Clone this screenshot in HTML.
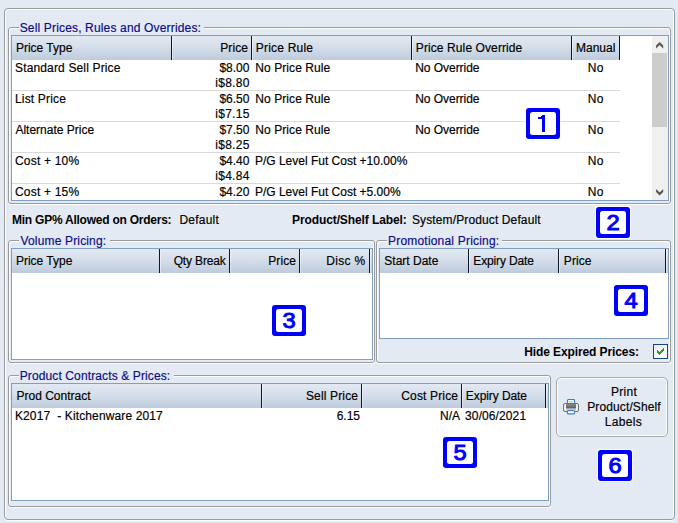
<!DOCTYPE html>
<html>
<head>
<meta charset="utf-8">
<title>Sell Prices</title>
<style>
*{box-sizing:border-box;margin:0;padding:0}
html,body{width:678px;height:523px;overflow:hidden;background:#e3eaf4}
body{position:relative;font-family:"Liberation Sans",sans-serif;font-size:12px;line-height:15px;color:#000}
.abs{position:absolute}
.grp{position:absolute;border:1px solid #9b9b9b;border-radius:3px;box-shadow:inset 1px 1px 0 #fff, inset -1px 0 0 #fff, 0 1px 0 #fff}
.leg{position:absolute;color:#0c0c86;background:#e3eaf4;white-space:nowrap;height:15px}
.tbl{position:absolute;background:#fff;border:1px solid #7f9fc1;overflow:hidden}
.hdr{position:absolute;left:0;top:0;height:24px;background:linear-gradient(#e2e9f2,#d3dde9 50%,#bdcbdd)}
.hs{position:absolute;top:0;width:2px;height:24px;border-left:1px solid #0b1626;border-right:1px solid rgba(255,255,255,.45)}
.t{position:absolute;white-space:nowrap;height:15px}
.t,.leg{-webkit-text-stroke:0.18px}
.t.b{-webkit-text-stroke:0}
.b{font-weight:bold}
.sep{position:absolute;left:0;height:1px;background:#d9d9d9}
.mk{position:absolute;width:34px;height:31px;border:4px solid #0000ff;border-radius:4px;background:#fff}
.mk svg{position:absolute;left:0;top:0}
</style>
</head>
<body>

<div class="grp" style="left:4px;top:8px;width:671px;height:512px;border-radius:4px"></div>
<div class="grp" style="left:8px;top:27px;width:663px;height:177px"></div>
<div class="leg" style="left:18.5px;top:21px;width:185.5px;padding-left:1.2px;letter-spacing:0.16px">Sell Prices, Rules and Overrides:</div>
<div class="tbl" style="left:11px;top:35px;width:658px;height:166px">
<div class="hdr" style="width:608px"></div>
<div class="hs" style="left:159px"></div>
<div class="hs" style="left:239px"></div>
<div class="hs" style="left:399px"></div>
<div class="hs" style="left:559px"></div>
<div class="hs" style="left:607px"></div>
<div class="t" style="left:3.9px;top:5px;">Price Type</div>
<div class="t" style="right:420px;top:5px;letter-spacing:0.1px;margin-right:-0.1px;">Price</div>
<div class="t" style="left:243.8px;top:5px;letter-spacing:0.2px;">Price Rule</div>
<div class="t" style="left:403.8px;top:5px;letter-spacing:0.1px;">Price Rule Override</div>
<div class="t" style="left:564px;top:5px;">Manual</div>
<div class="t" style="left:3px;top:25px;letter-spacing:0.15px;">Standard Sell Price</div>
<div class="t" style="right:418.6px;top:25px;">$8.00</div>
<div class="t" style="right:418.6px;top:40px;letter-spacing:0.3px;margin-right:-0.3px;">i$8.80</div>
<div class="t" style="left:243.2px;top:25px;letter-spacing:0.09px;">No Price Rule</div>
<div class="t" style="left:403.2px;top:25px;letter-spacing:-0.04px;">No Override</div>
<div class="t" style="left:575.8px;top:25px;letter-spacing:0.3px;">No</div>
<div class="sep" style="top:54px;width:608px"></div>
<div class="t" style="left:3px;top:56px;letter-spacing:0.17px;">List Price</div>
<div class="t" style="right:418.6px;top:56px;">$6.50</div>
<div class="t" style="right:418.6px;top:71px;letter-spacing:0.3px;margin-right:-0.3px;">i$7.15</div>
<div class="t" style="left:243.2px;top:56px;letter-spacing:0.09px;">No Price Rule</div>
<div class="t" style="left:403.2px;top:56px;letter-spacing:-0.04px;">No Override</div>
<div class="t" style="left:575.8px;top:56px;letter-spacing:0.3px;">No</div>
<div class="sep" style="top:85px;width:608px"></div>
<div class="t" style="left:3.4px;top:87px;">Alternate Price</div>
<div class="t" style="right:418.6px;top:87px;">$7.50</div>
<div class="t" style="right:418.6px;top:102px;letter-spacing:0.3px;margin-right:-0.3px;">i$8.25</div>
<div class="t" style="left:243.2px;top:87px;letter-spacing:0.09px;">No Price Rule</div>
<div class="t" style="left:403.2px;top:87px;letter-spacing:-0.04px;">No Override</div>
<div class="t" style="left:575.8px;top:87px;letter-spacing:0.3px;">No</div>
<div class="sep" style="top:116px;width:608px"></div>
<div class="t" style="left:3px;top:118px;letter-spacing:0.2px;">Cost + 10%</div>
<div class="t" style="right:418.6px;top:118px;">$4.40</div>
<div class="t" style="right:418.6px;top:133px;letter-spacing:0.3px;margin-right:-0.3px;">i$4.84</div>
<div class="t" style="left:242.9px;top:118px;">P/G Level Fut Cost +10.00%</div>
<div class="t" style="left:575.8px;top:118px;letter-spacing:0.3px;">No</div>
<div class="sep" style="top:147px;width:608px"></div>
<div class="t" style="left:3px;top:149px;letter-spacing:0.2px;">Cost + 15%</div>
<div class="t" style="right:418.6px;top:149px;">$4.20</div>
<div class="t" style="left:242.9px;top:149px;">P/G Level Fut Cost +5.00%</div>
<div class="t" style="left:575.8px;top:149px;letter-spacing:0.3px;">No</div>
<div class="abs" style="left:640px;top:0;width:16px;height:164px;background:#f0f0f0"></div>
<div class="abs" style="left:640px;top:17px;width:15px;height:74px;background:#cdcdcd"></div>
<svg class="abs" style="left:639px;top:0" width="17" height="17" viewBox="0 0 17 17"><polygon points="5.1,9.5 8.65,6.07 12.2,9.5 12.2,12.38 8.65,8.94 5.1,12.38" fill="#555"/></svg>
<svg class="abs" style="left:639px;top:147px" width="17" height="17" viewBox="0 0 17 17"><polygon points="5.1,6.1 8.65,9.55 12.2,6.1 12.2,8.95 8.65,12.4 5.1,8.95" fill="#555"/></svg>
</div>
<div class="t b" style="left:12px;top:213px;letter-spacing:-0.24px;">Min GP% Allowed on Orders:</div>
<div class="t" style="left:179.5px;top:213px;letter-spacing:0.2px;">Default</div>
<div class="t b" style="left:292px;top:213px;letter-spacing:-0.1px;">Product/Shelf Label:</div>
<div class="t" style="left:412px;top:213px;letter-spacing:0.12px;">System/Product Default</div>
<div class="grp" style="left:8px;top:240px;width:367px;height:123px"></div>
<div class="leg" style="left:18.5px;top:234px;width:91.5px;padding-left:2px;letter-spacing:0.16px">Volume Pricing:</div>
<div class="tbl" style="left:11px;top:248px;width:362px;height:112px">
<div class="hdr" style="width:360px"></div>
<div class="hs" style="left:147px"></div>
<div class="hs" style="left:217px"></div>
<div class="hs" style="left:287px"></div>
<div class="hs" style="left:357px"></div>
<div class="t" style="left:3.9px;top:5px;">Price Type</div>
<div class="t" style="right:146.2px;top:5px;letter-spacing:-0.15px;margin-right:0.15px;">Qty Break</div>
<div class="t" style="right:76px;top:5px;letter-spacing:0.1px;margin-right:-0.1px;">Price</div>
<div class="t" style="right:6.800000000000011px;top:5px;letter-spacing:0.3px;margin-right:-0.3px;">Disc %</div>
</div>
<div class="grp" style="left:376px;top:240px;width:295px;height:123px"></div>
<div class="leg" style="left:386.5px;top:234px;width:115.5px;padding-left:1.5px;letter-spacing:0.2px">Promotional Pricing:</div>
<div class="tbl" style="left:379px;top:248px;width:290px;height:91px">
<div class="hdr" style="width:288px"></div>
<div class="hs" style="left:88px"></div>
<div class="hs" style="left:178px"></div>
<div class="hs" style="left:285px"></div>
<div class="t" style="left:4.3px;top:5px;">Start Date</div>
<div class="t" style="left:93.3px;top:5px;letter-spacing:-0.15px;">Expiry Date</div>
<div class="t" style="left:183.8px;top:5px;letter-spacing:0.1px;">Price</div>
</div>
<div class="t b" style="right:39px;top:345px;letter-spacing:-0.1px;margin-right:0.1px">Hide Expired Prices:</div>
<div class="abs" style="left:653px;top:344px;width:15px;height:15px;background:linear-gradient(135deg,#e9e9e4,#fff 70%);border:1px solid #15457c"></div>
<svg class="abs" style="left:653px;top:344px" width="15" height="15" viewBox="0 0 15 15" fill="#21a121" shape-rendering="crispEdges"><rect x="4" y="6" width="1" height="3"/><rect x="5" y="7" width="1" height="3"/><rect x="6" y="8" width="1" height="3"/><rect x="7" y="7" width="1" height="3"/><rect x="8" y="6" width="1" height="3"/><rect x="9" y="5" width="1" height="3"/><rect x="10" y="4" width="1" height="3"/></svg>
<div class="grp" style="left:8px;top:375px;width:543px;height:132px"></div>
<div class="leg" style="left:18.5px;top:369px;width:155.5px;padding-left:1.2px;letter-spacing:0.12px">Product Contracts &amp; Prices:</div>
<div class="tbl" style="left:11px;top:383px;width:538px;height:118px">
<div class="hdr" style="width:536px"></div>
<div class="hs" style="left:249px"></div>
<div class="hs" style="left:349px"></div>
<div class="hs" style="left:449px"></div>
<div class="hs" style="left:533px"></div>
<div class="t" style="left:4.5px;top:5px;">Prod Contract</div>
<div class="t" style="right:190px;top:5px;letter-spacing:0.15px;margin-right:-0.15px;">Sell Price</div>
<div class="t" style="right:90px;top:5px;letter-spacing:0.15px;margin-right:-0.15px;">Cost Price</div>
<div class="t" style="left:453.8px;top:5px;letter-spacing:-0.08px;">Expiry Date</div>
<div class="t" style="left:2.9px;top:24.5px;letter-spacing:0.13px;">K2017&nbsp; - Kitchenware 2017</div>
<div class="t" style="right:188px;top:24.5px;">6.15</div>
<div class="t" style="right:88px;top:24.5px;">N/A</div>
<div class="t" style="left:453.1px;top:24.5px;letter-spacing:0.1px;">30/06/2021</div>
</div>
<div class="abs" style="left:556px;top:377px;width:112px;height:60px;border:1px solid #a9a9a9;border-radius:5px;background:#e3eaf4;box-shadow:inset 0 0 0 1px #fff"></div>
<div class="t" style="left:584px;top:385px;width:80px;letter-spacing:0.3px;text-align:center;">Print</div>
<div class="t" style="left:584px;top:400px;width:80px;letter-spacing:0.12px;text-align:center;">Product/Shelf</div>
<div class="t" style="left:583.4px;top:415px;width:80px;letter-spacing:0.3px;text-align:center;">Labels</div>
<svg class="abs" style="left:563px;top:399px" width="16" height="16" viewBox="0 0 16 16">
  <defs><linearGradient id="pb" x1="0" y1="0" x2="0" y2="1"><stop offset="0" stop-color="#8c8c8c"/><stop offset="1" stop-color="#5c5c5c"/></linearGradient></defs>
  <rect x="4.5" y="0.5" width="7" height="5" rx="1" fill="#fff" stroke="#3f7dc2" stroke-width="1.15"/>
  <rect x="6" y="2" width="4" height="1.5" fill="#b5d6f5"/>
  <rect x="0.5" y="4.5" width="15" height="8" rx="1.5" fill="#f2f2f2" stroke="#707070"/>
  <rect x="3" y="5" width="10" height="4.6" fill="url(#pb)"/>
  <rect x="3" y="9.6" width="10" height="1.8" fill="#c4c4c4"/>
  <rect x="4.5" y="11.5" width="7" height="3.4" rx="1" fill="#fff" stroke="#3f7dc2" stroke-width="1.15"/>
  <rect x="5.5" y="12" width="5" height="1" fill="#d8ebfb"/>
</svg>
<svg class="abs" style="left:526px;top:108px;overflow:visible" width="34" height="31" viewBox="0 0 34 31"><rect x="-1" y="-1" width="36" height="33" fill="#fff" fill-opacity="0.8"/><rect x="0" y="0" width="34" height="31" rx="3" fill="#00f"/><rect x="4" y="4" width="26" height="23" rx="2.5" fill="#fff"/><g shape-rendering="crispEdges" fill="#00f"><rect x="16" y="7" width="3" height="17"/><rect x="15" y="8" width="1" height="3"/><rect x="12" y="9" width="3" height="2"/></g></svg>
<svg class="abs" style="left:596px;top:207px;overflow:visible" width="34" height="31" viewBox="0 0 34 31"><rect x="-1" y="-1" width="36" height="33" fill="#fff" fill-opacity="0.8"/><rect x="0" y="0" width="34" height="31" rx="3" fill="#00f"/><rect x="4" y="4" width="26" height="23" rx="2.5" fill="#fff"/><text x="0" y="0" text-anchor="middle" transform="translate(17 22.7) scale(1.05 1)" style="font-family:'Liberation Sans',sans-serif;font-size:22.6px" fill="#00f" stroke="#00f" stroke-width="1">2</text></svg>
<svg class="abs" style="left:272px;top:305px;overflow:visible" width="34" height="31" viewBox="0 0 34 31"><rect x="-1" y="-1" width="36" height="33" fill="#fff" fill-opacity="0.8"/><rect x="0" y="0" width="34" height="31" rx="3" fill="#00f"/><rect x="4" y="4" width="26" height="23" rx="2.5" fill="#fff"/><text x="0" y="0" text-anchor="middle" transform="translate(17 22.7) scale(1.05 1)" style="font-family:'Liberation Sans',sans-serif;font-size:22.6px" fill="#00f" stroke="#00f" stroke-width="1">3</text></svg>
<svg class="abs" style="left:614px;top:285px;overflow:visible" width="34" height="31" viewBox="0 0 34 31"><rect x="-1" y="-1" width="36" height="33" fill="#fff" fill-opacity="0.8"/><rect x="0" y="0" width="34" height="31" rx="3" fill="#00f"/><rect x="4" y="4" width="26" height="23" rx="2.5" fill="#fff"/><text x="0" y="0" text-anchor="middle" transform="translate(17 22.7) scale(1.05 1)" style="font-family:'Liberation Sans',sans-serif;font-size:22.6px" fill="#00f" stroke="#00f" stroke-width="1">4</text></svg>
<svg class="abs" style="left:443px;top:437px;overflow:visible" width="34" height="31" viewBox="0 0 34 31"><rect x="-1" y="-1" width="36" height="33" fill="#fff" fill-opacity="0.8"/><rect x="0" y="0" width="34" height="31" rx="3" fill="#00f"/><rect x="4" y="4" width="26" height="23" rx="2.5" fill="#fff"/><text x="0" y="0" text-anchor="middle" transform="translate(17 22.7) scale(1.05 1)" style="font-family:'Liberation Sans',sans-serif;font-size:22.6px" fill="#00f" stroke="#00f" stroke-width="1">5</text></svg>
<svg class="abs" style="left:598px;top:450px;overflow:visible" width="34" height="31" viewBox="0 0 34 31"><rect x="-1" y="-1" width="36" height="33" fill="#fff" fill-opacity="0.8"/><rect x="0" y="0" width="34" height="31" rx="3" fill="#00f"/><rect x="4" y="4" width="26" height="23" rx="2.5" fill="#fff"/><text x="0" y="0" text-anchor="middle" transform="translate(17 22.7) scale(1.05 1)" style="font-family:'Liberation Sans',sans-serif;font-size:22.6px" fill="#00f" stroke="#00f" stroke-width="1">6</text></svg>

</body>
</html>
